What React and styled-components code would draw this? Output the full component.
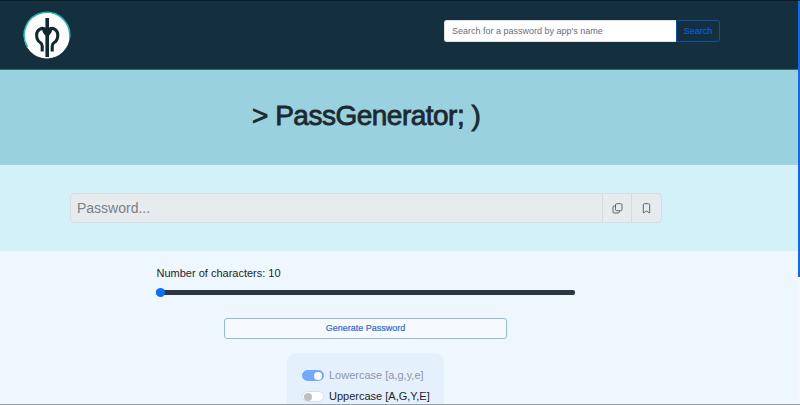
import React from "react";
import styled, { createGlobalStyle } from "styled-components";

const GlobalStyle = createGlobalStyle`
  * { box-sizing: border-box; }
  body { margin: 0; overflow: hidden; background: #eef7fe; font-family: "Liberation Sans", Arial, sans-serif; color: #212529; }
`;

const Page = styled.div`
  display: grid;
  grid-template-columns: 798px 2px;
  height: 405px;
  overflow: hidden;
  border-top: 1px solid #071a26;
  border-bottom: 1px solid #98a0a7;
`;

const Content = styled.div`
  height: 403px;
  overflow: hidden;
`;

const ScrollTrack = styled.div`
  background: #f4f7fb;
`;

const ScrollThumb = styled.div`
  height: 276px;
  background: #1269e8;
`;

const Header = styled.header`
  display: flex;
  justify-content: space-between;
  align-items: flex-start;
  height: 69px;
  padding: 9px 78px 0 22px;
  background: #142f3d;
  border-bottom: 1px solid #3d6570;
`;

const Logo = styled.svg`
  display: block;
  width: 50px;
  height: 50px;
`;

const SearchForm = styled.div`
  display: flex;
  width: 276px;
  height: 22px;
  margin-top: 10px;
`;

const SearchInput = styled.input`
  width: 232px;
  height: 22px;
  padding: 0 7px 1px;
  border: 1px solid #dee2e6;
  border-right: 0;
  border-radius: 3px 0 0 3px;
  background: #fff;
  font: 9px "Liberation Sans", Arial, sans-serif;
  letter-spacing: ${(p) => p.$tracking};
  outline: 0;
  &::placeholder { color: #66717a; opacity: 1; }
`;

const SearchButton = styled.button`
  width: 44px;
  height: 22px;
  padding: 0;
  border: 1px solid #0d4fae;
  border-radius: 0 3px 3px 0;
  background: transparent;
  color: #0d5bd0;
  font: 9px "Liberation Sans", Arial, sans-serif;
  -webkit-text-stroke: 0.2px #0d5bd0;
`;

const Banner = styled.section`
  display: flex;
  height: 95px;
  padding: 30px 0 0 252px;
  background: #99d1de;
`;

const Title = styled.h1`
  margin: 0;
  font-size: 28px;
  line-height: 32px;
  font-weight: 400;
  white-space: nowrap;
  color: #1c2930;
  -webkit-text-stroke: 0.8px #1c2930;
`;

const PasswordBand = styled.section`
  height: 86px;
  padding: 28px 0 0 70px;
  background: #d3f1f9;
`;

const PasswordGroup = styled.div`
  display: grid;
  grid-template-columns: 1fr 29px 30px;
  width: 592px;
  height: 30px;
  border: 1px solid #d8dde1;
  border-radius: 4px;
  background: #e8ebee;
  overflow: hidden;
`;

const PasswordInput = styled.input`
  min-width: 0;
  padding: 0 6px;
  border: 0;
  background: transparent;
  font: 14px "Liberation Sans", Arial, sans-serif;
  outline: 0;
  &::placeholder { color: #7b8087; opacity: 1; }
`;

const IconButton = styled.button`
  display: flex;
  align-items: center;
  justify-content: center;
  padding: 0;
  border: 0;
  border-left: 1px solid #d5dbdf;
  background: transparent;
  color: #62676d;
`;

const Settings = styled.main`
  display: flex;
  flex-direction: column;
  align-items: flex-start;
  padding-top: 15px;
`;

const LengthField = styled.div`
  width: 419px;
  height: 52px;
  margin-left: 156px;
`;

const LengthLabel = styled.label`
  display: block;
  height: 14px;
  padding-left: 0.5px;
  font-size: 11px;
  line-height: 14px;
`;

const Track = styled.div`
  display: flex;
  align-items: center;
  height: 5px;
  margin-top: 10px;
  border-radius: 2px;
  background: #2c3640;
`;

const Thumb = styled.span`
  width: 9px;
  height: 9px;
  flex: none;
  border-radius: 50%;
  background: #0d6efd;
`;

const GenerateButton = styled.button`
  width: 283px;
  height: 21px;
  margin-left: 224px;
  padding: 0 0 1px;
  border: 1px solid #92b8f2;
  border-radius: 3px;
  background: #f6fafd;
  color: #2e6cdb;
  font: 9px "Liberation Sans", Arial, sans-serif;
  -webkit-text-stroke: 0.2px #2e6cdb;
`;

const Options = styled.div`
  display: flex;
  flex-direction: column;
  width: 157px;
  height: 110px;
  margin: 14px 0 0 287px;
  padding: 12px 0 0 15px;
  border-radius: 9px;
  background: #e5f0fd;
`;

const Option = styled.label`
  display: flex;
  align-items: center;
  gap: 5px;
  height: 21px;
  color: ${(p) => (p.$dim ? "#8d98a5" : "#212529")};
  font-size: 11px;
  white-space: nowrap;
`;

const Switch = styled.span`
  display: flex;
  align-items: center;
  justify-content: ${(p) => (p.$on ? "flex-end" : "flex-start")};
  width: 22px;
  height: 11px;
  padding: 0 1px;
  border: 1px solid ${(p) => (p.$on ? "#72a9fa" : "#dadfe4")};
  border-radius: 6px;
  background: ${(p) => (p.$on ? "#72a9fa" : "#fff")};
`;

const Knob = styled.span`
  width: 8px;
  height: 8px;
  border-radius: 50%;
  background: ${(p) => (p.$on ? "#fff" : "#bdbfc1")};
`;

const Text = styled.span`
  letter-spacing: ${(p) => p.$tracking || "0"};
`;

const OptionText = styled.span`
  padding-bottom: 1px;
`;

const BrandLogo = () => (
  <Logo viewBox="0 0 50 50" aria-label="Logo">
    <circle cx="24.8" cy="25.5" r="23" fill="#fff" />
    <path d="M5.5 37A22.8 22.8 0 1 1 47.6 28" fill="none" stroke="#20b9b6" strokeWidth="1.5" />
    <g fill="none" stroke="#102a32">
      <path d="M25.2 8V47" strokeWidth="3.6" />
      <path d="M24 20C20.5 16.5 14.6 19.5 14.6 25C14.6 29.5 16.5 31.5 18.2 32.5Q20.2 33.7 20.2 36V41.5" strokeWidth="3.1" />
      <path d="M26.5 20C30 16.5 35.8 19.5 35.8 25C35.8 29.5 34 31.5 32.2 32.5Q30.2 33.7 30.2 36V41.5" strokeWidth="3.1" />
    </g>
    <path d="M20 18.4H30.4L29.7 22Q28.5 25 25.2 26Q22 25 20.7 22Z" fill="#102a32" />
  </Logo>
);

const CopyIcon = () => (
  <svg width="11" height="11" viewBox="0 0 11 11" fill="none" stroke="currentColor">
    <rect x="3.5" y="0.7" width="6.5" height="7" rx="1.2" />
    <path d="M3.3 3H2Q1 3 1 4V9Q1 10 2 10H6.3Q7.3 10 7.3 9V8" />
  </svg>
);

const BookmarkIcon = () => (
  <svg width="9" height="11" viewBox="0 0 9 11" fill="none" stroke="currentColor">
    <path d="M1.3 10V1.7Q1.3 .7 2.3 .7H6.7Q7.7 .7 7.7 1.7V10L4.5 8Z" />
  </svg>
);

export default function App() {
  return (
    <>
      <GlobalStyle />
      <Page>
        <Content>
          <Header>
            <BrandLogo />
            <SearchForm>
              <SearchInput $tracking="0px" placeholder="Search for a password by app's name" />
              <SearchButton><Text>Search</Text></SearchButton>
            </SearchForm>
          </Header>
          <Banner><Title><Text $tracking="-0.5px">&gt; PassGenerator; )</Text></Title></Banner>
          <PasswordBand>
            <PasswordGroup>
              <PasswordInput placeholder="Password..." disabled />
              <IconButton aria-label="Copy"><CopyIcon /></IconButton>
              <IconButton aria-label="Save"><BookmarkIcon /></IconButton>
            </PasswordGroup>
          </PasswordBand>
          <Settings>
            <LengthField>
              <LengthLabel>Number of characters: 10</LengthLabel>
              <Track><Thumb /></Track>
            </LengthField>
            <GenerateButton><Text>Generate Password</Text></GenerateButton>
            <Options>
              <Option $dim><Switch $on><Knob $on /></Switch><OptionText>Lowercase [a,g,y,e]</OptionText></Option>
              <Option><Switch><Knob /></Switch><OptionText>Uppercase [A,G,Y,E]</OptionText></Option>
            </Options>
          </Settings>
        </Content>
        <ScrollTrack><ScrollThumb /></ScrollTrack>
      </Page>
    </>
  );
}
